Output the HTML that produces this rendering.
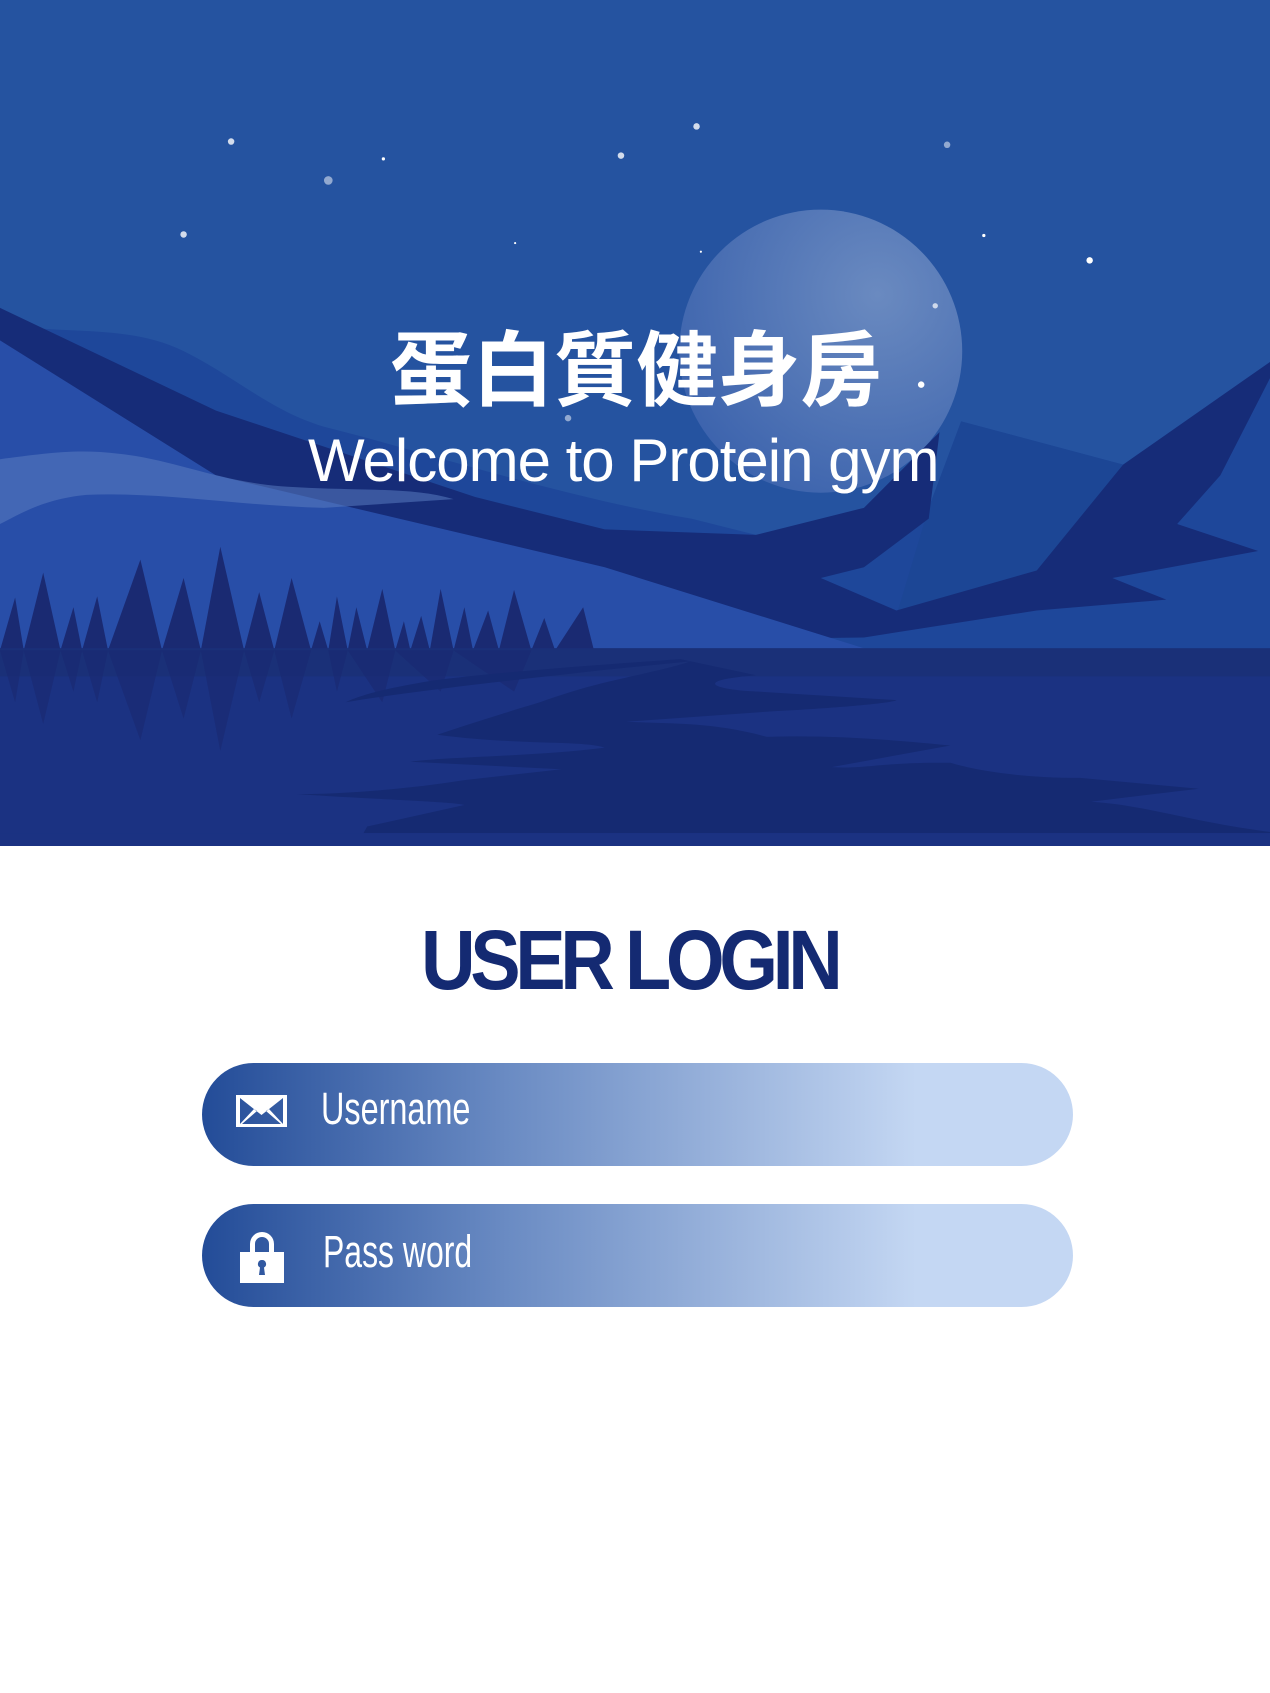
<!DOCTYPE html>
<html><head><meta charset="utf-8">
<style>
html,body{margin:0;padding:0;background:#fff;}
body{width:1270px;height:1693px;position:relative;overflow:hidden;font-family:"Liberation Sans","Noto Sans CJK TC",sans-serif;}
svg.hero{position:absolute;left:0;top:0;}
.t{position:absolute;white-space:nowrap;color:#fff;transform-origin:left top;}
.pill{position:absolute;left:202px;width:871px;height:103px;border-radius:52px;background:linear-gradient(90deg,#234c98 0%,#6a8bc3 35%,#a9c0e4 68%,#c4d7f3 82%,#c4d7f3 100%);}
</style></head><body>
<svg class="hero" width="1270" height="846" viewBox="0 0 1176 783" preserveAspectRatio="none">
<defs>
<radialGradient id="moon" cx="0.7" cy="0.3" r="0.8"><stop offset="0" stop-color="#6a8ac0"/><stop offset="1" stop-color="#3c63ad"/></radialGradient>
</defs>
<rect width="1176" height="783" fill="#2553a0"/>
<circle cx="760" cy="325" r="131" fill="url(#moon)"/>
<g fill="#fff">
<circle cx="214" cy="131" r="3" opacity=".8"/><circle cx="304" cy="167" r="4" opacity=".5"/><circle cx="355" cy="147" r="1.5"/>
<circle cx="170" cy="217" r="3" opacity=".8"/><circle cx="575" cy="144" r="3" opacity=".8"/><circle cx="645" cy="117" r="3" opacity=".8"/>
<circle cx="877" cy="134" r="3" opacity=".5"/><circle cx="911" cy="218" r="1.5"/><circle cx="1009" cy="241" r="3"/>
<circle cx="866" cy="283" r="2.5" opacity=".7"/><circle cx="853" cy="356" r="3"/><circle cx="526" cy="387" r="3" opacity=".5"/>
<circle cx="477" cy="225" r="1"/><circle cx="649" cy="233" r="1"/>
</g>
<path d="M0 300 C60 310 120 300 170 325 C220 350 250 380 300 395 C400 420 520 460 640 480 L700 495 L860 470 L890 390 L1040 430 L1176 335 L1176 600 L0 600Z" fill="#1e479a"/>
<path d="M860 470 L890 390 L1040 430 L960 530 L830 570Z" fill="#1c4695"/>
<path d="M0 285 L200 380 L440 460 L560 490 L700 495 L800 470 L870 400 L860 480 L800 525 L760 535 L830 565 L960 528 L1040 430 L1176 335 L1176 350 L1130 440 L1090 485 L1165 510 L1030 535 L1080 555 L960 565 L800 590 L0 600Z" fill="#162c78"/>
<path d="M0 315 L200 440 L560 525 L800 600 L0 600Z" fill="#284ea8"/>
<path d="M0 425 C40 420 70 415 110 420 C160 425 200 445 260 450 C330 455 380 450 420 462 L300 470 C220 468 150 455 80 458 C40 462 20 475 0 485Z" fill="#5a7cc0" opacity=".55"/>
<g fill="#1a2a72">
<path d="M0 602 L14 553 L22 602 L40 530 L56 602 L68 562 L76 602 L90 552 L100 602 L130 518 L150 602 L170 535 L186 602 L204 506 L226 602 L240 548 L254 602 L270 535 L288 602 L296 575 L304 602 L312 552 L322 602 L330 562 L340 602 L354 545 L366 602 L374 575 L380 602 L390 570 L398 602 L408 545 L420 602 L430 562 L438 602 L452 565 L462 602 L476 546 L492 602 L504 572 L514 602 L540 562 L550 602Z"/>
</g>
<rect x="0" y="600" width="1176" height="183" fill="#1b3282"/>
<rect x="0" y="600" width="1176" height="26" fill="#1a3078"/>
<g fill="#1a2a72" opacity=".7">
<path d="M0 602 L14 650 L22 602 L40 670 L56 602 L68 640 L76 602 L90 650 L100 602 L130 685 L150 602 L170 665 L186 602 L204 695 L226 602 L240 650 L254 602 L270 665 L288 602 L304 602 L312 640 L322 602 L354 650 L366 602 L408 640 L420 602 L476 640 L492 602 L550 602Z"/>
</g>
<g fill="#152a72">
<path d="M320 650 C380 640 470 630 560 620 L640 612 C600 625 560 628 500 650 C450 665 420 675 405 680 C480 690 540 685 560 692 C500 700 420 700 380 705 L520 712 L430 722 C380 730 320 735 275 735 C350 740 420 742 430 745 L340 765 L330 783 L1176 783 L1176 770 C1100 760 1060 745 1010 742 L1110 730 L1000 720 C940 720 900 712 880 706 C820 705 800 712 770 710 L880 690 C830 685 770 680 710 682 C660 668 620 670 580 668 L720 658 C780 655 830 650 830 648 L700 640 C660 638 640 630 700 625 L630 610 C560 615 460 622 400 630 C350 638 330 645 320 650Z"/>
</g>
<rect x="0" y="771" width="1176" height="12" fill="#1b3282"/>
</svg>

<div class="t" style="left:390px;top:304px;font-size:82px;font-weight:bold;">蛋白質健身房</div>
<div class="t" style="left:308px;top:426px;font-size:60px;letter-spacing:-1px;">Welcome to Protein gym</div>

<div class="t" style="left:421px;top:912px;font-size:84px;font-weight:bold;color:#142a72;letter-spacing:-6px;transform:scaleX(0.9);">USER LOGIN</div>

<div class="pill" style="top:1063px;"></div>
<div class="pill" style="top:1204px;"></div>

<svg style="position:absolute;left:236px;top:1095px" width="51" height="32" viewBox="0 0 51 32">
<path d="M0 0 H51 V32 H0Z M4 3 L25.5 20 L47 3 V29 L33 14 L30 16 L45 29 H6 L21 16 L18 14 L4 29Z" fill="#fff" fill-rule="evenodd"/>
</svg>
<div class="t" style="left:321px;top:1083px;font-size:45px;transform:scaleX(0.72);">Username</div>

<svg style="position:absolute;left:240px;top:1230px" width="44" height="53" viewBox="0 0 44 53">
<path d="M10 22 V14 A12 12 0 0 1 34 14 V22 H29 V14 A7 7 0 0 0 15 14 V22Z" fill="#fff"/>
<path d="M0 22 H44 V53 H0Z M22 30 A4 4 0 0 0 20 37.5 L19 45 H25 L24 37.5 A4 4 0 0 0 22 30Z" fill="#fff" fill-rule="evenodd"/>
</svg>
<div class="t" style="left:323px;top:1226px;font-size:45px;transform:scaleX(0.71);">Pass word</div>
</body></html>
